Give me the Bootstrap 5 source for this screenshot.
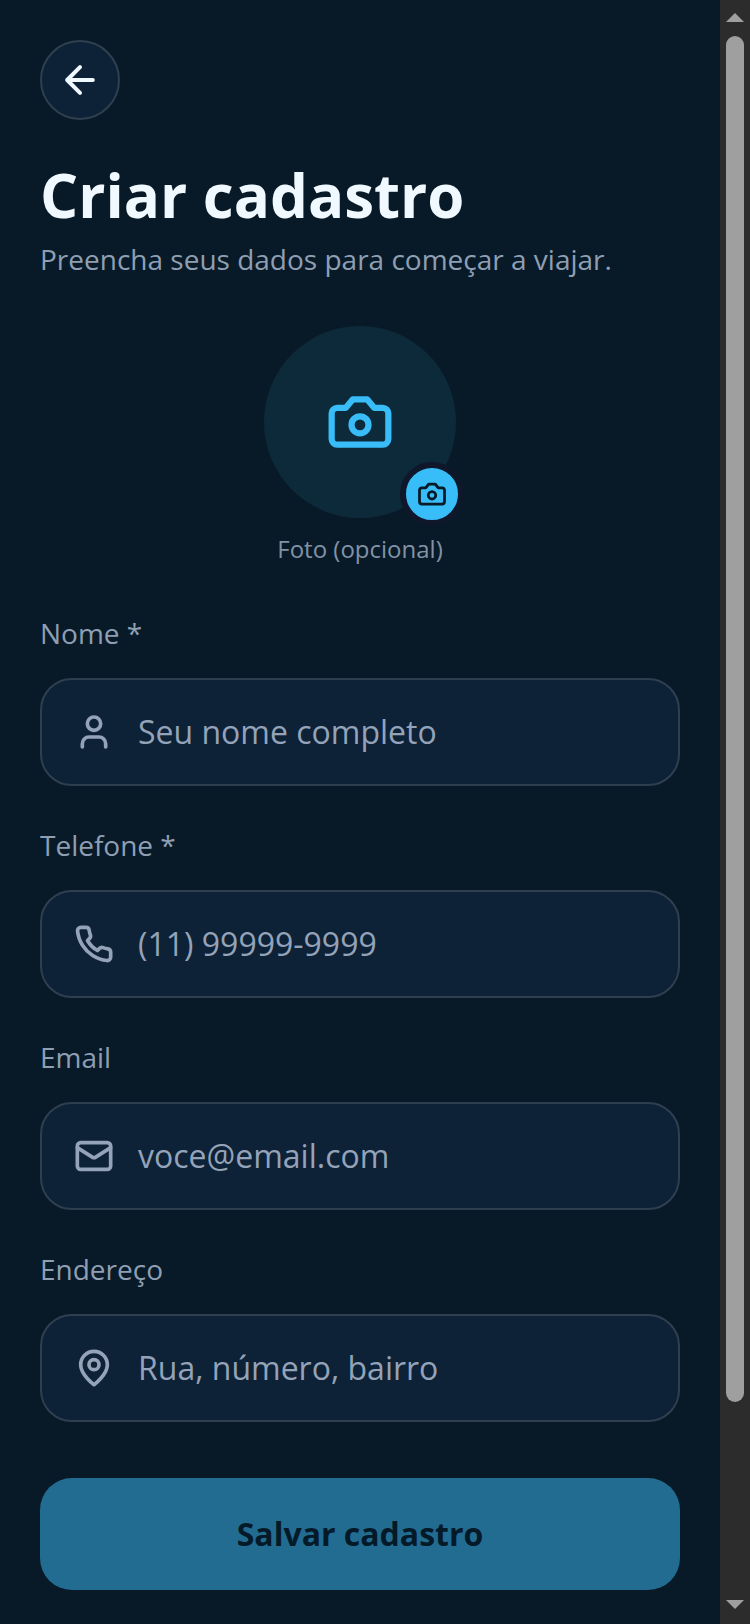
<!DOCTYPE html>
<html lang="pt-BR">
<head>
<meta charset="utf-8">
<meta name="viewport" content="width=device-width, initial-scale=1">
<title>Criar cadastro</title>
<link rel="stylesheet" href="https://cdn.jsdelivr.net/npm/bootstrap@5.3.0/dist/css/bootstrap.min.css">
<style>
  body { background: #081a27; color: #8f9fb3; font-family: "Open Sans", "Noto Sans", sans-serif; font-size: 28px; line-height: 38px; }
  svg { display: block; flex-shrink: 0; fill: none; stroke: currentColor; stroke-width: 2.2; stroke-linecap: round; stroke-linejoin: round; }
  .page-body { padding: 40px 40px 34px; }
  .back-btn { width: 80px; height: 80px; background: #0d2137; border: 2px solid #2f3f50; color: #f0f9ff; }
  .page-title { margin: 34px 0 4px; font-size: 60px; line-height: 82px; font-weight: 700; color: #f0f9ff; }
  .photo-area { margin-top: 48px; gap: 14px; font-size: 24px; line-height: 34px; color: #8292a6; }
  .photo-btn { width: 192px; height: 192px; background: #0d2a3b; color: #38bdf8; }
  .photo-badge { right: -8px; bottom: -8px; width: 64px; height: 64px; background: #38bdf8; border: 6px solid #0f172a; color: #081a27; }
  .signup-form { margin-top: 48px; gap: 40px; }
  .field-stack { gap: 26px; }
  .field-box { height: 108px; padding: 0 32px; gap: 24px; background: #0d2137; border: 2px solid #2f3f50; border-radius: 32px; color: #94a3b8; }
  .field-box:focus-within { border-color: #38bdf8; }
  .field-box input { min-width: 0; padding: 0; border: 0; outline: 0; background: transparent; color: #f0f9ff; font-size: 32px; line-height: 44px; }
  .field-box input::placeholder { color: #94a3b8; opacity: 1; }
  .save-btn { height: 112px; margin-top: 16px; border-radius: 32px; background: #226c92; color: #051a28; font-size: 32px; line-height: 44px; font-weight: 700; }
  .scroll-rail { width: 30px; padding: 13px 6px 15px; background: #2c2c2c; color: #9f9f9f; }
  .scroll-rail svg { fill: currentColor; stroke: none; }
  .scroll-track { margin: 14px 0 12px; }
  .scroll-thumb { height: 88%; border-radius: 9px; background: #9f9f9f; }
</style>
<script src="https://cdn.jsdelivr.net/npm/bootstrap@5.3.0/dist/js/bootstrap.bundle.min.js"></script>
</head>
<body>
<div class="d-flex min-vh-100">
  <main class="page-body flex-grow-1">
    <button type="button" class="back-btn rounded-circle p-0 d-flex align-items-center justify-content-center" aria-label="Voltar">
      <svg width="44" height="44" viewBox="0 0 24 24"><path d="m12 19-7-7 7-7M19 12H5"/></svg>
    </button>
    <h1 class="page-title">Criar cadastro</h1>
    <p class="mb-0">Preencha seus dados para começar a viajar.</p>

    <div class="photo-area d-flex flex-column align-items-center">
      <button type="button" class="photo-btn position-relative rounded-circle border-0 p-0 d-flex align-items-center justify-content-center" aria-label="Adicionar foto">
        <svg width="68" height="68" viewBox="0 0 24 24"><path d="M14.5 4h-5L7 7H4a2 2 0 0 0-2 2v9a2 2 0 0 0 2 2h16a2 2 0 0 0 2-2V9a2 2 0 0 0-2-2h-3l-2.5-3z"/><circle cx="12" cy="13" r="3"/></svg>
        <span class="photo-badge position-absolute rounded-circle d-flex align-items-center justify-content-center">
          <svg width="30" height="30" viewBox="0 0 24 24"><path d="M14.5 4h-5L7 7H4a2 2 0 0 0-2 2v9a2 2 0 0 0 2 2h16a2 2 0 0 0 2-2V9a2 2 0 0 0-2-2h-3l-2.5-3z"/><circle cx="12" cy="13" r="3"/></svg>
        </span>
      </button>
      <span>Foto (opcional)</span>
    </div>

    <form class="signup-form d-flex flex-column">
      <div class="field-stack d-flex flex-column">
        <label for="nome">Nome *</label>
        <div class="field-box d-flex align-items-center">
          <svg width="40" height="40" viewBox="0 0 24 24"><path d="M19 21v-2a4 4 0 0 0-4-4H9a4 4 0 0 0-4 4v2"/><circle cx="12" cy="7" r="4"/></svg>
          <input id="nome" class="flex-grow-1" type="text" placeholder="Seu nome completo">
        </div>
      </div>
      <div class="field-stack d-flex flex-column">
        <label for="telefone">Telefone *</label>
        <div class="field-box d-flex align-items-center">
          <svg width="40" height="40" viewBox="0 0 24 24"><path d="M22 16.92v3a2 2 0 0 1-2.18 2 19.79 19.79 0 0 1-8.63-3.07 19.5 19.5 0 0 1-6-6 19.79 19.79 0 0 1-3.07-8.67A2 2 0 0 1 4.11 2h3a2 2 0 0 1 2 1.72 12.84 12.84 0 0 0 .7 2.81 2 2 0 0 1-.45 2.11L8.09 9.91a16 16 0 0 0 6 6l1.27-1.27a2 2 0 0 1 2.11-.45 12.84 12.84 0 0 0 2.81.7A2 2 0 0 1 22 16.92z"/></svg>
          <input id="telefone" class="flex-grow-1" type="tel" placeholder="(11) 99999-9999">
        </div>
      </div>
      <div class="field-stack d-flex flex-column">
        <label for="email">Email</label>
        <div class="field-box d-flex align-items-center">
          <svg width="40" height="40" viewBox="0 0 24 24"><rect x="2" y="4" width="20" height="16" rx="2"/><path d="m22 7-8.97 5.7a1.94 1.94 0 0 1-2.06 0L2 7"/></svg>
          <input id="email" class="flex-grow-1" type="email" placeholder="voce@email.com">
        </div>
      </div>
      <div class="field-stack d-flex flex-column">
        <label for="endereco">Endereço</label>
        <div class="field-box d-flex align-items-center">
          <svg width="40" height="40" viewBox="0 0 24 24"><path d="M20 10c0 6-8 12-8 12s-8-6-8-12a8 8 0 0 1 16 0Z"/><circle cx="12" cy="10" r="3"/></svg>
          <input id="endereco" class="flex-grow-1" type="text" placeholder="Rua, número, bairro">
        </div>
      </div>
      <button type="submit" class="save-btn w-100 border-0">Salvar cadastro</button>
    </form>
  </main>

  <div class="scroll-rail d-flex flex-column flex-shrink-0" aria-hidden="true">
    <svg width="18" height="9" viewBox="0 0 18 9"><path d="M0 9 9 0l9 9z"/></svg>
    <div class="scroll-track flex-grow-1 d-flex flex-column"><div class="scroll-thumb"></div></div>
    <svg width="18" height="9" viewBox="0 0 18 9"><path d="M0 0h18L9 9z"/></svg>
  </div>
</div>
</body>
</html>
